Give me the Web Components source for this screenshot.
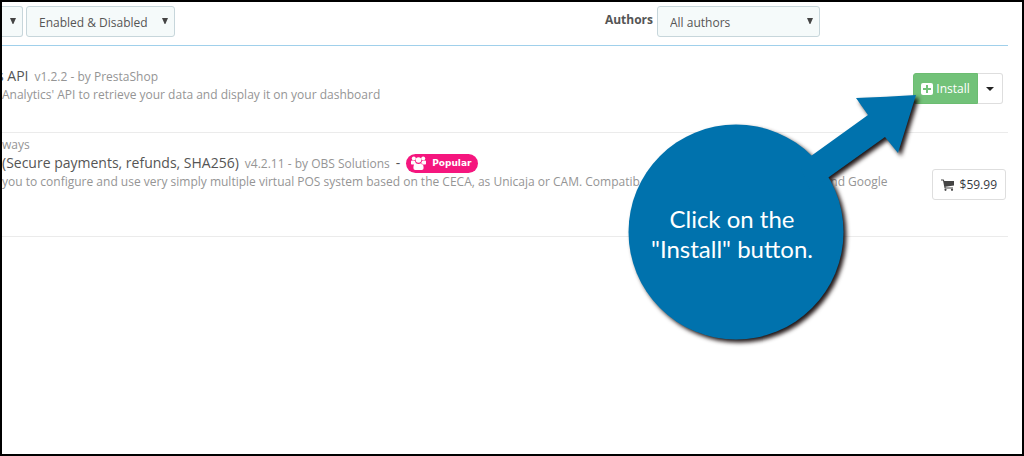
<!DOCTYPE html>
<html lang="en">
<head>
    <meta charset="utf-8">
    <title>Modules</title>
    <style>
        body {
            margin: 0px;
            font-family: "Open Sans", "Noto Sans", sans-serif;
            font-size: 12px;
        }
    </style>
</head>
<body>
    <module-page>
        <filter-bar slot="filters">
            <filter-select slot="left" label="Category" hide-label cut></filter-select>
            <filter-select slot="left" label="Status" hide-label value="Enabled &amp; Disabled"></filter-select>
            <filter-select slot="right" label="Authors" value="All authors" wide></filter-select>
        </filter-bar>

        <module-row version="v1.2.2 - by PrestaShop" cut>
            <span slot="name">s API</span>
            <span slot="info">Analytics' API to retrieve your data and display it on your dashboard</span>
            <install-button slot="action">Install</install-button>
        </module-row>

        <module-row version="v4.2.11 - by OBS Solutions" tall>
            <span slot="category">ways</span>
            <span slot="name">(Secure payments, refunds, SHA256)</span>
            <popular-badge slot="badge">Popular</popular-badge>
            <span slot="info">you to configure and use very simply multiple virtual POS system based on the CECA, as Unicaja or CAM. Compatib</span>
            <span slot="info-end">nd Google</span>
            <price-button slot="action">$59.99</price-button>
        </module-row>

        <call-out slot="callout">Click on the<br>"Install" button.</call-out>
    </module-page>

    <script>
        class ModulePage extends HTMLElement {
            constructor() {
                super();
                this.attachShadow({ mode: 'open' });
            }

            connectedCallback() {
                this.shadowRoot.innerHTML = `
                <style>
                    :host {
                        display: block;
                        position: relative;
                        box-sizing: border-box;
                        min-height: 100vh;
                        padding: 4px 14px 0px 0px;
                        border: 2px solid #000;
                        background-color: #fff;
                        overflow: hidden;
                    }
                </style>
                <slot name="filters"></slot>
                <main><slot></slot></main>
                <slot name="callout"></slot>
                `
            }
        }

        class FilterBar extends HTMLElement {
            constructor() {
                super();
                this.attachShadow({ mode: 'open' });
            }

            connectedCallback() {
                this.shadowRoot.innerHTML = `
                <style>
                    :host {
                        display: flex;
                        justify-content: space-between;
                        padding-bottom: 8px;
                        border-bottom: 1px solid #a0d0eb;
                    }

                    #left {
                        display: flex;
                        gap: 3px;
                    }

                    #right {
                        padding-right: 188px;
                    }
                </style>
                <div id="left"><slot name="left"></slot></div>
                <div id="right"><slot name="right"></slot></div>
                `
            }
        }

        class FilterSelect extends HTMLElement {
            constructor() {
                super();
                this.attachShadow({ mode: 'open' });
            }

            connectedCallback() {
                const label = this.getAttribute('label')
                const hidden = this.hasAttribute('hide-label')
                this.shadowRoot.innerHTML = `
                <style>
                    :host {
                        display: flex;
                        gap: 4px;
                    }

                    label {
                        padding-top: 5px;
                        line-height: 18px;
                        font-weight: bold;
                        color: #555;
                    }

                    #box {
                        display: grid;
                        align-items: center;
                    }

                    #box > * {
                        grid-area: 1 / 1;
                    }

                    select {
                        appearance: none;
                        box-sizing: border-box;
                        width: 149px;
                        height: 31px;
                        margin: 0px;
                        padding: 2px 12px 0px 12px;
                        border: 1px solid #c7d6db;
                        border-radius: 3px;
                        background-color: #f5fafa;
                        font: inherit;
                        color: #555;
                    }

                    svg {
                        justify-self: end;
                        width: 6px;
                        height: 6px;
                        margin: 0px 7px 2px 0px;
                        pointer-events: none;
                    }

                    :host([wide]) select {
                        width: 163px;
                    }

                    :host([cut]) select {
                        width: 21px;
                        padding: 0px;
                        border-left: 0px;
                        border-radius: 0px 3px 3px 0px;
                    }
                </style>
                ${hidden ? '' : `<label for="valg">${label}</label>`}
                <div id="box">
                    <select id="valg" ${hidden ? `aria-label="${label}"` : ''}>
                        <option></option>
                    </select>
                    <svg viewBox="0 0 6 6"><path d="M0 0H6L3.4 6H2.6Z" fill="#444"/></svg>
                </div>
                `
                this.shadowRoot.querySelector('option').textContent = this.getAttribute('value') || ''
            }
        }

        class ModuleRow extends HTMLElement {
            constructor() {
                super();
                this.attachShadow({ mode: 'open' });
            }

            connectedCallback() {
                this.shadowRoot.innerHTML = `
                <style>
                    :host {
                        display: flex;
                        justify-content: space-between;
                        box-sizing: border-box;
                        min-height: 87px;
                        border-bottom: 1px solid #ebebeb;
                        color: #959595;
                    }

                    :host([tall]) {
                        min-height: 104px;
                    }

                    #text {
                        flex: 1;
                        padding-top: 20px;
                        white-space: nowrap;
                    }

                    :host([tall]) #text {
                        padding-top: 4px;
                    }

                    #category {
                        display: block;
                        line-height: 16px;
                    }

                    h3 {
                        display: flex;
                        align-items: baseline;
                        gap: 6px;
                        height: 20px;
                        margin: 0px;
                        font-size: 14px;
                        font-weight: normal;
                        line-height: 20px;
                        color: #555;
                    }

                    /* the name runs in from outside the view */
                    :host([cut]) h3 {
                        text-indent: -5px;
                    }

                    #version {
                        font-size: 12px;
                        text-indent: 0px;
                        color: #959595;
                    }

                    p {
                        display: flex;
                        justify-content: space-between;
                        margin: 0px;
                        line-height: 18px;
                    }

                    #action {
                        display: flex;
                        align-items: flex-start;
                        padding: 27px 5px 0px 20px;
                    }

                    :host([tall]) #action {
                        padding: 36px 2px 0px 44px;
                    }
                </style>
                <div id="text">
                    ${this.hasAttribute('tall') ? '<span id="category"><slot name="category"></slot></span>' : ''}
                    <h3>
                        <slot name="name"></slot>
                        <span id="version">${this.getAttribute('version')}</span>
                        ${this.hasAttribute('tall') ? '<span>-</span>' : ''}
                        <slot name="badge"></slot>
                    </h3>
                    <p><slot name="info"></slot><slot name="info-end"></slot></p>
                </div>
                <div id="action"><slot name="action"></slot></div>
                `
            }
        }

        class PopularBadge extends HTMLElement {
            constructor() {
                super();
                this.attachShadow({ mode: 'open' });
            }

            connectedCallback() {
                this.shadowRoot.innerHTML = `
                <style>
                    :host {
                        display: flex;
                        align-self: center;
                        align-items: center;
                        gap: 6px;
                        box-sizing: border-box;
                        height: 19px;
                        padding: 0px 7px 0px 5px;
                        border-radius: 10px;
                        background-color: #f5167e;
                        color: #fff;
                        font-family: "DejaVu Sans", sans-serif;
                        font-size: 9px;
                        font-weight: bold;
                        line-height: 19px;
                    }

                    svg {
                        width: 15px;
                        height: 14px;
                        margin-bottom: 1px;
                    }
                </style>
                <svg viewBox="0 0 15 14" fill="#fff">
                    <circle cx="2.8" cy="2.4" r="2"/>
                    <circle cx="12.2" cy="2.4" r="2"/>
                    <circle cx="7.5" cy="4" r="2.8"/>
                    <path d="M0 8V5.500Q0 4.300 1.400 4.500L4 5Q4.400 7 5.200 7.300L4 8.400H.8Q0 8.400 0 8ZM15 8V5.500Q15 4.300 13.600 4.500L11 5Q10.600 7 9.800 7.300L11 8.400H14.200Q15 8.400 15 8ZM2.400 12Q2.400 7.500 5 7.300Q7.500 8.600 10 7.300Q12.600 7.500 12.600 12Q12.600 14 10.800 14H4.200Q2.400 14 2.400 12Z"/>
                </svg>
                <slot></slot>
                `
            }
        }

        class InstallButton extends HTMLElement {
            constructor() {
                super();
                this.attachShadow({ mode: 'open' });
            }

            connectedCallback() {
                this.shadowRoot.innerHTML = `
                <style>
                    :host {
                        display: flex;
                    }

                    button {
                        display: flex;
                        align-items: center;
                        justify-content: center;
                        gap: 3px;
                        box-sizing: border-box;
                        height: 31px;
                        margin: 0px;
                        font: inherit;
                        cursor: pointer;
                    }

                    #install {
                        width: 65px;
                        padding: 0px;
                        border: 1px solid #6cbd71;
                        border-radius: 3px 0px 0px 3px;
                        background-color: #72c279;
                        color: #fff;
                    }

                    #more {
                        width: 25px;
                        padding: 0px;
                        border: 1px solid #dedede;
                        border-left: 0px;
                        border-radius: 0px 3px 3px 0px;
                        background-color: #fff;
                    }
                </style>
                <button id="install">
                    <svg width="12" height="12" viewBox="0 0 12 12">
                        <rect width="12" height="12" rx="2" fill="#fff"/>
                        <path d="M6 2V10M2 6H10" stroke="#72c279" stroke-width="2"/>
                    </svg>
                    <slot></slot>
                </button>
                <button id="more" aria-label="More actions">
                    <svg width="8" height="4" viewBox="0 0 8 4"><path d="M0 0H8L4 4Z" fill="#222"/></svg>
                </button>
                `
            }
        }

        class PriceButton extends HTMLElement {
            constructor() {
                super();
                this.attachShadow({ mode: 'open' });
            }

            connectedCallback() {
                this.shadowRoot.innerHTML = `
                <style>
                    :host {
                        display: block;
                    }

                    button {
                        display: flex;
                        align-items: center;
                        gap: 6px;
                        box-sizing: border-box;
                        height: 31px;
                        margin: 0px;
                        padding: 0px 8px;
                        border: 1px solid #dedede;
                        border-radius: 3px;
                        background-color: #fff;
                        font: inherit;
                        color: #363a41;
                        cursor: pointer;
                    }
                </style>
                <button>
                    <svg width="13" height="12" viewBox="0 0 13 12" fill="#444">
                        <path d="M0 .5H2.400Q3 .5 3.100 1.200L3.200 2H13V6.600L4.400 7.700L4.600 8.500H12V9.500H4Q3.600 9.500 3.500 9L2 1.500H0Z"/>
                        <circle cx="4.500" cy="10.800" r="1.100"/>
                        <circle cx="11" cy="10.800" r="1.100"/>
                    </svg>
                    <slot></slot>
                </button>
                `
            }
        }

        class CallOut extends HTMLElement {
            constructor() {
                super();
                this.attachShadow({ mode: 'open' });
            }

            connectedCallback() {
                this.shadowRoot.innerHTML = `
                <style>
                    /* lies over the rows, with its tip on the install button */
                    :host {
                        display: block;
                        position: absolute;
                        top: 88px;
                        right: 92px;
                        width: 310px;
                        height: 260px;
                        pointer-events: none;
                    }

                    svg {
                        position: absolute;
                        inset: 0px;
                        overflow: visible;
                        filter: drop-shadow(3px 3px 2px rgba(20,10,10,0.95));
                    }

                    #text {
                        position: relative;
                        width: 216px;
                        padding: 114px 0px 0px 4px;
                        font-family: Lato, "Open Sans", sans-serif;
                        font-size: 24px;
                        line-height: 30px;
                        text-align: center;
                        color: #fff;
                    }
                </style>
                <svg width="310" height="260" viewBox="0 0 310 260" fill="#0072ad">
                    <circle cx="116" cy="142" r="107.500"/>
                    <path d="M180 76L191 66L248 25L236 8Q266 7 296 5L278 63L265 47L209 87L190 100Z"/>
                </svg>
                <div id="text"><slot></slot></div>
                `
            }
        }

        customElements.define('module-page', ModulePage);
        customElements.define('filter-bar', FilterBar);
        customElements.define('filter-select', FilterSelect);
        customElements.define('module-row', ModuleRow);
        customElements.define('popular-badge', PopularBadge);
        customElements.define('install-button', InstallButton);
        customElements.define('price-button', PriceButton);
        customElements.define('call-out', CallOut);
    </script>
</body>
</html>
